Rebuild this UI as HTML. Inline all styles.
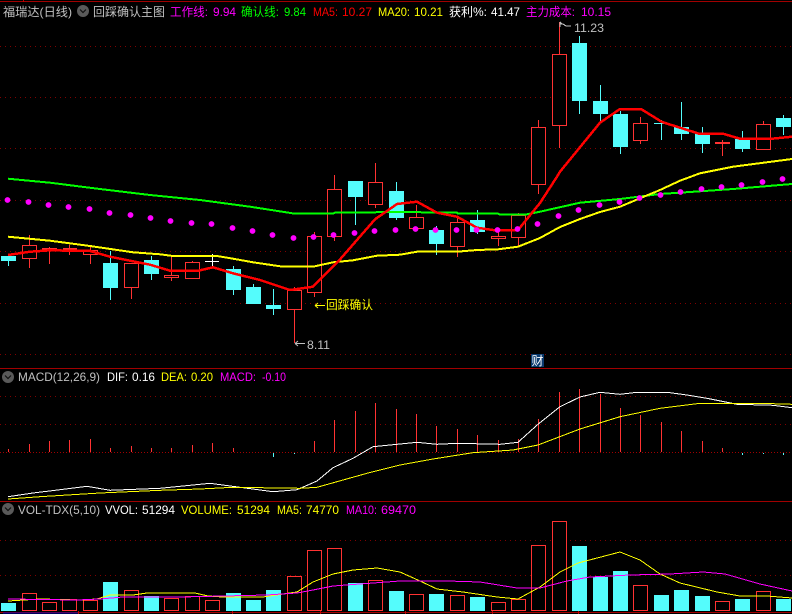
<!DOCTYPE html>
<html><head><meta charset="utf-8">
<style>
html,body{margin:0;padding:0;background:#000;width:792px;height:614px;overflow:hidden}
svg{display:block}
text{font-family:"Liberation Sans","WenQuanYi Zen Hei","Noto Sans CJK SC",sans-serif;font-size:12px}
.g{fill:#c0c0c0}.w{fill:#fff}.y{fill:#ff0}.m{fill:#f0f}.l{fill:#0f0}.r{fill:#f00}
</style></head><body>
<svg width="792" height="614" viewBox="0 0 792 614" xmlns="http://www.w3.org/2000/svg">
<rect width="792" height="614" fill="#000"/>
<g shape-rendering="crispEdges">
<path d="M0 1.5H792M0 368.5H792M0 501.5H792M0 612.5H792" stroke="#a00000" stroke-width="1.4" fill="none"/>
<path d="M23.5 0V2M78.5 611V614M232.5 611V614M320.5 611V614M405.5 611V614M492.5 611V614M578.5 611V614" stroke="#c00000" fill="none"/>
<path d="M0 46.5H792M0 97.5H792M0 148.5H792M0 200.5H792M0 251.5H792M0 303.5H792M0 354.5H792M0 396.5H792M0 424.5H792M0 540.5H792M0 575.5H792" stroke="#800000" stroke-width="1" stroke-dasharray="1 4" fill="none"/>
<path d="M0 452.5H792" stroke="#a00000" stroke-width="1" stroke-dasharray="1 2" fill="none"/>

<!-- wicks -->
<path stroke="#54fcfc" fill="none" d="M8.5 256V266M110.5 251V300M151.5 256V280M233.5 266V295M253.5 284V304M273.5 289V315M355.5 181V225M396.5 182V220M436.5 226V255M477.5 210V234M579.5 36V114M600.5 85V121M620.5 111V154M661.5 120V140M681.5 102V140M702.5 127V153M742.5 131V152M783.5 115V135"/>
<path stroke="#ff3232" fill="none" d="M29.5 235V268M49.5 247V264M69.5 245V255M90.5 245V264M131.5 263V299M171.5 256V281M192.5 261V279M294.5 287V343M314.5 232V297M334.5 175V241M375.5 163V208M416.5 205V229M457.5 218V257M498.5 232V246M518.5 213V247M538.5 120V194M559.5 22V148M640.5 117V144M722.5 140V156M763.5 121V150"/>
<!-- white cross -->
<path stroke="#fff" fill="none" d="M205 261.5H219M212.5 254V267"/>
<path stroke="#54fcfc" fill="none" d="M654 123.5H669"/>
<!-- cyan bodies -->
<g fill="#54fcfc">
<rect x="1" y="256" width="15" height="5"/><rect x="103" y="263" width="15" height="25"/><rect x="144" y="260" width="15" height="14"/><rect x="226" y="269" width="15" height="21"/><rect x="246" y="287" width="15" height="17"/><rect x="266" y="305" width="15" height="4"/><rect x="348" y="181" width="15" height="16"/><rect x="389" y="191" width="15" height="27"/><rect x="429" y="230" width="15" height="14"/><rect x="470" y="220" width="15" height="12"/><rect x="572" y="43" width="15" height="58"/><rect x="593" y="101" width="15" height="13"/><rect x="613" y="114" width="15" height="33"/><rect x="674" y="127" width="15" height="7"/><rect x="695" y="134" width="15" height="10"/><rect x="735" y="139" width="15" height="10"/><rect x="776" y="118" width="15" height="9"/>
</g>
<!-- red bodies -->
<g fill="#000" stroke="#ff3232">
<rect x="22.5" y="245.5" width="14" height="13"/><rect x="83.5" y="250.5" width="14" height="4"/><rect x="124.5" y="263.5" width="14" height="24"/><rect x="164.5" y="275.5" width="14" height="2"/><rect x="185.5" y="262.5" width="14" height="16"/><rect x="287.5" y="290.5" width="14" height="19"/><rect x="307.5" y="236.5" width="14" height="56"/><rect x="327.5" y="189.5" width="14" height="47"/><rect x="368.5" y="182.5" width="14" height="22"/><rect x="409.5" y="217.5" width="14" height="11"/><rect x="450.5" y="222.5" width="14" height="24"/><rect x="491.5" y="236.5" width="14" height="2"/><rect x="511.5" y="215.5" width="14" height="22"/><rect x="531.5" y="127.5" width="14" height="57"/><rect x="552.5" y="54.5" width="14" height="71"/><rect x="633.5" y="123.5" width="14" height="17"/><rect x="756.5" y="124.5" width="14" height="25"/>
</g>
<g fill="#ff3232">
<rect x="42" y="248" width="15" height="2"/><rect x="63" y="248" width="14" height="3"/><rect x="715" y="142" width="15" height="2"/>
</g>
</g>

<!-- main lines -->
<g fill="none" stroke-width="2" shape-rendering="crispEdges">
<polyline stroke="#00ff00" points="8,178.7 50,182.7 100,189 150,195 200,200 250,206.7 295,213.7 333,213.7 335,212.7 400,212 457,212.7 458,213.7 498,213.7 500,214.7 525,214.7 540,211.7 580,202.7 620,199 660,194 700,191.3 733,189 792,184"/>
<polyline stroke="#ffff00" points="8,236.7 50,240.7 90,246 133,252.3 160,254.3 173,256 217,256 233,258.7 253,262.3 283,266.7 313,266.7 333,262.3 353,260.3 377,255.7 400,254.7 417,251.7 457,251.7 477,250 498,249.3 518,246.7 540,238 560,227 580,219 600,212 620,206.7 640,198.3 660,190 680,180.7 700,173.3 713,170.7 733,166.7 792,159"/>
<polyline stroke="#ff0000" stroke-width="2.5" points="8,255 30,251.7 50,250.3 90,251 110,256.7 150,264.7 170,270.7 197,271 213,267.3 233,273.3 260,280 290,290 313,286.7 338,261.7 375,219.3 397,204 417,201.7 437,212.7 457,216.7 477,227.7 493,230 518,230 540,203 557,176.7 560,171.7 600,122.7 620,109 641,109 662,122 700,134 723,133.7 740,138.7 772,138.7 792,136.7"/>
</g>
<!-- dots -->
<g fill="#ff00ff">
<circle cx="7.5" cy="200" r="2.9"/><circle cx="28.5" cy="202" r="2.9"/><circle cx="48.5" cy="205" r="2.9"/><circle cx="68.5" cy="207" r="2.9"/><circle cx="89.5" cy="209" r="2.9"/><circle cx="109.5" cy="213" r="2.9"/><circle cx="130.5" cy="215" r="2.9"/><circle cx="150.5" cy="218" r="2.9"/><circle cx="170.5" cy="221" r="2.9"/><circle cx="191.5" cy="223" r="2.9"/><circle cx="211.5" cy="224" r="2.9"/><circle cx="232.5" cy="228" r="2.9"/><circle cx="252.5" cy="231" r="2.9"/><circle cx="272.5" cy="235" r="2.9"/><circle cx="293.5" cy="238" r="2.9"/><circle cx="313.5" cy="237" r="2.9"/><circle cx="333.5" cy="235" r="2.9"/><circle cx="354.5" cy="233" r="2.9"/><circle cx="374.5" cy="231" r="2.9"/><circle cx="395.5" cy="230" r="2.9"/><circle cx="415.5" cy="229" r="2.9"/><circle cx="435.5" cy="230" r="2.9"/><circle cx="456.5" cy="230" r="2.9"/><circle cx="476.5" cy="230" r="2.9"/><circle cx="497.5" cy="230" r="2.9"/><circle cx="517.5" cy="229" r="2.9"/><circle cx="537.5" cy="224" r="2.9"/><circle cx="558.5" cy="216" r="2.9"/><circle cx="578.5" cy="210" r="2.9"/><circle cx="599.5" cy="205" r="2.9"/><circle cx="619.5" cy="202" r="2.9"/><circle cx="639.5" cy="198" r="2.9"/><circle cx="660.5" cy="195" r="2.9"/><circle cx="680.5" cy="192" r="2.9"/><circle cx="701.5" cy="189" r="2.9"/><circle cx="721.5" cy="187" r="2.9"/><circle cx="741.5" cy="185" r="2.9"/><circle cx="762.5" cy="182" r="2.9"/><circle cx="782.5" cy="179" r="2.9"/>
</g>

<!-- MACD bars -->
<g shape-rendering="crispEdges" fill="none">
<path stroke="#ff3232" d="M8.5 449V452M29.5 444V452M49.5 441V452M69.5 440V452M90.5 439V452M110.5 448V452M131.5 446V452M151.5 448V452M171.5 448V452M192.5 445V452M212.5 443V452M233.5 448V452M314.5 441V452M334.5 420V452M355.5 411V452M375.5 403V452M396.5 409V452M416.5 414V452M436.5 426V452M457.5 429V452M477.5 435V452M498.5 440V452M518.5 439V452M538.5 419V452M559.5 392V452M579.5 389V452M600.5 394V452M620.5 408V452M640.5 415V452M661.5 422V452M681.5 431V452M702.5 441V452M722.5 448V452"/>
<path stroke="#54fcfc" d="M273.5 453V457M294.5 453V454M742.5 453V455M763.5 453V454M783.5 453V455"/>
<polyline stroke="#ffffff" points="8,496.7 33,493 60,489.7 87,486.3 110,490.3 160,488.3 210,483.3 243,487.7 273,491.7 297,489.7 317,481 333,467.7 353,458.3 373,446.7 390,445 417,442.3 437,444.3 457,443.3 500,444.3 518,442.3 538,424.3 560,406.7 580,397 600,392.3 620,394.3 637,392.3 667,392.3 687,395 707,398.3 737,404.3 773,405.3 792,407.7"/>
<polyline stroke="#ffff00" points="8,499 40,496.7 100,493 160,490.3 200,489 233,487.3 300,488.3 317,487.3 367,473.3 400,465 433,459 473,452.7 513,450 538,445 580,429 620,416.7 660,408.3 697,403.7 773,403.7 792,404.3"/>
</g>

<!-- Volume bars -->
<g shape-rendering="crispEdges">
<g fill="#54fcfc">
<rect x="1" y="603" width="15" height="8"/><rect x="103" y="582" width="15" height="29"/><rect x="144" y="596" width="15" height="15"/><rect x="226" y="593" width="15" height="18"/><rect x="246" y="600" width="15" height="11"/><rect x="266" y="590" width="15" height="21"/><rect x="348" y="583" width="15" height="28"/><rect x="389" y="591" width="15" height="20"/><rect x="429" y="594" width="15" height="17"/><rect x="470" y="597" width="15" height="14"/><rect x="572" y="546" width="15" height="65"/><rect x="593" y="577" width="15" height="34"/><rect x="613" y="571" width="15" height="40"/><rect x="654" y="595" width="15" height="16"/><rect x="674" y="590" width="15" height="21"/><rect x="695" y="596" width="15" height="15"/><rect x="735" y="599" width="15" height="12"/><rect x="776" y="599" width="15" height="12"/>
</g>
<g fill="#000" stroke="#ff3232">
<rect x="22.5" y="593.5" width="14" height="17"/><rect x="42.5" y="602.5" width="14" height="8"/><rect x="62.5" y="599.5" width="14" height="11"/><rect x="83.5" y="600.5" width="14" height="10"/><rect x="124.5" y="590.5" width="14" height="20"/><rect x="164.5" y="598.5" width="14" height="12"/><rect x="185.5" y="596.5" width="14" height="14"/><rect x="205.5" y="600.5" width="14" height="10"/><rect x="287.5" y="576.5" width="14" height="34"/><rect x="307.5" y="550.5" width="14" height="60"/><rect x="327.5" y="548.5" width="14" height="62"/><rect x="368.5" y="580.5" width="14" height="30"/><rect x="409.5" y="594.5" width="14" height="16"/><rect x="450.5" y="595.5" width="14" height="15"/><rect x="491.5" y="602.5" width="14" height="8"/><rect x="511.5" y="599.5" width="14" height="11"/><rect x="531.5" y="545.5" width="14" height="65"/><rect x="552.5" y="521.5" width="14" height="89"/><rect x="633.5" y="585.5" width="14" height="25"/><rect x="715.5" y="601.5" width="14" height="9"/><rect x="756.5" y="591.5" width="14" height="19"/>
</g>
<g fill="none">
<polyline stroke="#ffff00" points="8,601 40,599 80,600 97,599 110,595 133,595 147,593 195,593 208,596 223,597 263,597 283,594 297,592 313,582 333,574 353,570 377,568 400,572 420,581 437,589 463,592 497,597 518,599 540,587 560,572 578,563 620,552 640,560 660,574 680,583 717,592 740,596 767,596 792,598"/>
<polyline stroke="#ff00ff" points="8,599 77,600 100,599 123,597 180,597 267,595 297,593 313,590 333,586 400,581 447,581 480,582 517,588 540,588 567,581 590,577 630,575 670,574 703,572 725,574 760,584 792,591"/>
</g>
<path stroke="#0000c0" d="M3 613H78" fill="none"/>
</g>

<!-- icons -->
<g>
<circle cx="83" cy="11" r="6" fill="#5a5a5a"/><path d="M80 9.5L83 12.5L86 9.5" stroke="#111" stroke-width="1.2" fill="none"/>
<circle cx="8" cy="377" r="6" fill="#5a5a5a"/><path d="M5 375.5L8 378.5L11 375.5" stroke="#111" stroke-width="1.2" fill="none"/>
<circle cx="8" cy="509" r="6" fill="#5a5a5a"/><path d="M5 507.5L8 510.5L11 507.5" stroke="#111" stroke-width="1.2" fill="none"/>
</g>

<!-- header text -->
<text x="3" y="16" class="g" textLength="69" lengthAdjust="spacingAndGlyphs">福瑞达(日线)</text>
<text x="93" y="16" class="g" textLength="72" lengthAdjust="spacingAndGlyphs">回踩确认主图</text>
<text x="170" y="16" class="m" textLength="38" lengthAdjust="spacingAndGlyphs">工作线:</text>
<text x="213" y="16" class="m" textLength="23" lengthAdjust="spacingAndGlyphs">9.94</text>
<text x="241" y="16" class="l" textLength="38" lengthAdjust="spacingAndGlyphs">确认线:</text>
<text x="284" y="16" class="l" textLength="22" lengthAdjust="spacingAndGlyphs">9.84</text>
<text x="313" y="16" class="r" textLength="25" lengthAdjust="spacingAndGlyphs">MA5:</text>
<text x="342" y="16" class="r" textLength="30" lengthAdjust="spacingAndGlyphs">10.27</text>
<text x="378" y="16" class="y" textLength="32" lengthAdjust="spacingAndGlyphs">MA20:</text>
<text x="414" y="16" class="y" textLength="29" lengthAdjust="spacingAndGlyphs">10.21</text>
<text x="449" y="16" class="w" textLength="38" lengthAdjust="spacingAndGlyphs">获利%:</text>
<text x="491" y="16" class="w" textLength="29" lengthAdjust="spacingAndGlyphs">41.47</text>
<text x="526" y="16" class="m" textLength="49" lengthAdjust="spacingAndGlyphs">主力成本:</text>
<text x="581" y="16" class="m" textLength="30" lengthAdjust="spacingAndGlyphs">10.15</text>

<!-- annotations -->
<path d="M560 24H563L566 26H571M560 22V27M560 22L562 24" stroke="#c0c0c0" fill="none" shape-rendering="crispEdges"/>
<text x="574" y="32" class="g" textLength="30" lengthAdjust="spacingAndGlyphs">11.23</text>
<path d="M295 343.5H305M295 343.5L298 341M295 343.5L298 346" stroke="#c0c0c0" fill="none"/>
<text x="307" y="349" class="g" textLength="23" lengthAdjust="spacingAndGlyphs">8.11</text>
<path d="M315 305.5H325M315 305.5L318 303M315 305.5L318 308" stroke="#ff0" fill="none"/>
<text x="326" y="309" class="y" textLength="47" lengthAdjust="spacingAndGlyphs">回踩确认</text>
<rect x="531" y="354" width="13" height="13" fill="#0a3a6e"/>
<text x="531.5" y="365" class="w" textLength="12" lengthAdjust="spacingAndGlyphs">财</text>

<!-- MACD text -->
<text x="18" y="381" class="g" textLength="82" lengthAdjust="spacingAndGlyphs">MACD(12,26,9)</text>
<text x="107" y="381" class="w" textLength="21" lengthAdjust="spacingAndGlyphs">DIF:</text>
<text x="132" y="381" class="w" textLength="23" lengthAdjust="spacingAndGlyphs">0.16</text>
<text x="161" y="381" class="y" textLength="26" lengthAdjust="spacingAndGlyphs">DEA:</text>
<text x="191" y="381" class="y" textLength="22" lengthAdjust="spacingAndGlyphs">0.20</text>
<text x="220" y="381" class="m" textLength="36" lengthAdjust="spacingAndGlyphs">MACD:</text>
<text x="262" y="381" class="m" textLength="24" lengthAdjust="spacingAndGlyphs">-0.10</text>

<!-- VOL text -->
<text x="18" y="514" class="g" textLength="82" lengthAdjust="spacingAndGlyphs">VOL-TDX(5,10)</text>
<text x="105" y="514" class="w" textLength="33" lengthAdjust="spacingAndGlyphs">VVOL:</text>
<text x="142" y="514" class="w" textLength="33" lengthAdjust="spacingAndGlyphs">51294</text>
<text x="181" y="514" class="y" textLength="51" lengthAdjust="spacingAndGlyphs">VOLUME:</text>
<text x="237" y="514" class="y" textLength="33" lengthAdjust="spacingAndGlyphs">51294</text>
<text x="277" y="514" class="y" textLength="25" lengthAdjust="spacingAndGlyphs">MA5:</text>
<text x="306" y="514" class="y" textLength="33" lengthAdjust="spacingAndGlyphs">74770</text>
<text x="346" y="514" class="m" textLength="31" lengthAdjust="spacingAndGlyphs">MA10:</text>
<text x="381" y="514" class="m" textLength="35" lengthAdjust="spacingAndGlyphs">69470</text>
</svg>
</body></html>
